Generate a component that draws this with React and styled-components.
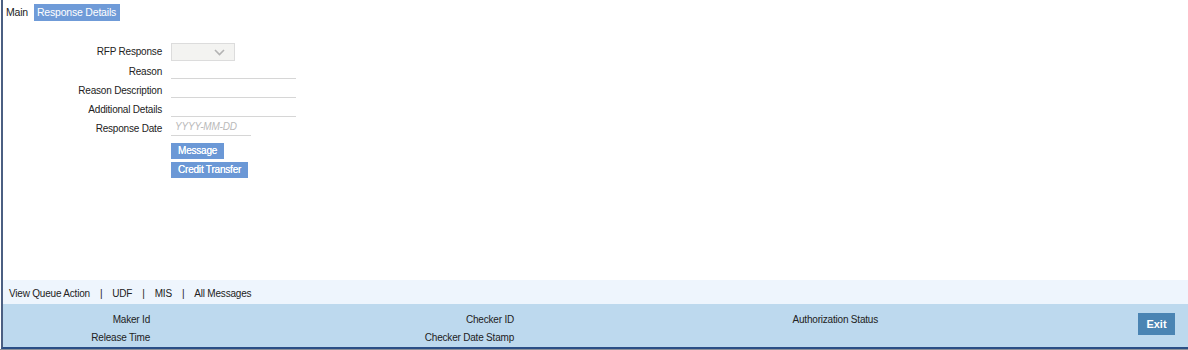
import React from "react";
import styled, { createGlobalStyle } from "styled-components";

const Global = createGlobalStyle`
  html, body { margin: 0; padding: 0; background: #fff; }
  body { font-family: "Liberation Sans", Arial, sans-serif; font-size: 10px; letter-spacing: -0.2px; color: #222; }
  * { box-sizing: border-box; }
`;

const Frame = styled.div`
  width: 1188px;
  height: 350px;
  display: flex;
  flex-direction: column;
  padding-left: 1px;
  border-bottom: 1px solid #8d939b;
`;

const Inner = styled.div`
  flex: 1;
  display: flex;
  flex-direction: column;
  border-left: 2px solid #4b5f82;
  border-bottom: 2px solid #2b4f86;
`;

const Content = styled.div`
  flex: 1;
  display: flex;
  flex-direction: column;
`;

const TabBar = styled.div`
  display: flex;
  padding-top: 4px;
  height: 21px;
`;

const Tab = styled.div`
  height: 17px;
  line-height: 17px;
  padding: 0 4px 0 3px;
  font-size: 10.5px;
  color: ${(p) => (p.$active ? "#fff" : "#222")};
  background: ${(p) => (p.$active ? "#6f9bd8" : "transparent")};
  margin-left: ${(p) => (p.$active ? "2px" : "0")};
`;

const Form = styled.div`
  display: grid;
  grid-template-columns: 159px 1fr;
  column-gap: 9px;
  margin-top: 22px;
`;

const Label = styled.div`
  text-align: right;
  color: #222;
  height: ${(p) => p.$h || 19}px;
  line-height: ${(p) => p.$h || 19}px;
  padding-top: ${(p) => (p.$h ? 0 : 1)}px;
`;

const Field = styled.div`
  height: ${(p) => p.$h || 19}px;
  display: flex;
  align-items: flex-start;
`;

const Select = styled.div`
  width: 64px;
  height: 18px;
  background: #f3f3f1;
  border: 1px solid #dcdcdc;
  display: flex;
  align-items: center;
  justify-content: flex-end;
  padding-right: 9px;
`;

const Input = styled.div`
  width: ${(p) => p.$w}px;
  height: 18px;
  border-bottom: 1px solid #d6d6d6;
  line-height: 18px;
  padding-left: 4px;
  color: #b9b9b9;
  font-style: italic;
`;

const Buttons = styled.div`
  grid-column: 2;
  display: flex;
  flex-direction: column;
  align-items: flex-start;
  gap: 3px;
  margin-top: 6px;
`;

const Btn = styled.div`
  height: 16px;
  line-height: 16px;
  padding: 0 7px;
  background: #6b98d6;
  color: #fff;
  text-shadow: 0 0 0.4px #fff;
`;

const LinkBar = styled.div`
  height: 24px;
  background: #eef5fd;
  display: flex;
  align-items: center;
  padding-left: 6px;
  padding-top: 2px;
  color: #222;
`;

const Sep = styled.span`
  margin: 0 10px;
`;

const Audit = styled.div`
  height: 43px;
  background: #bdd9ee;
  display: flex;
  align-items: flex-start;
`;

const AuditGrid = styled.div`
  flex: 1;
  display: grid;
  grid-template-columns: 147px 216px 148px 216px 148px 1fr;
  grid-auto-rows: 18px;
  padding-top: 7px;
`;

const AuditLabel = styled.div`
  text-align: right;
  line-height: 18px;
  color: #222;
  white-space: nowrap;
  grid-column: ${(p) => p.$col};
  grid-row: ${(p) => p.$row};
`;

const Exit = styled.div`
  margin: 9px 13px 0 0;
  width: 37px;
  height: 22px;
  line-height: 22px;
  text-align: center;
  background: #4a84b3;
  color: #fff;
  font-weight: bold;
  font-size: 11px;
  letter-spacing: 0;
`;

const Chevron = () => (
  <svg width="11" height="7" viewBox="0 0 11 7">
    <polyline points="1,1 5.5,5.5 10,1" fill="none" stroke="#b3b3b3" strokeWidth="1.6" />
  </svg>
);

export default function App() {
  return (
    <>
      <Global />
      <Frame>
        <Inner>
          <Content>
            <TabBar>
              <Tab>Main</Tab>
              <Tab $active>Response Details</Tab>
            </TabBar>
            <Form>
              <Label $h={18}>RFP Response</Label>
              <Field $h={18}>
                <Select>
                  <Chevron />
                </Select>
              </Field>
              <Label>Reason</Label>
              <Field>
                <Input $w={125} />
              </Field>
              <Label>Reason Description</Label>
              <Field>
                <Input $w={125} />
              </Field>
              <Label>Additional Details</Label>
              <Field>
                <Input $w={125} />
              </Field>
              <Label>Response Date</Label>
              <Field>
                <Input $w={80}>YYYY-MM-DD</Input>
              </Field>
              <Buttons>
                <Btn>Message</Btn>
                <Btn>Credit Transfer</Btn>
              </Buttons>
            </Form>
          </Content>
          <LinkBar>
            <span>View Queue Action</span>
            <Sep>|</Sep>
            <span>UDF</span>
            <Sep>|</Sep>
            <span>MIS</span>
            <Sep>|</Sep>
            <span>All Messages</span>
          </LinkBar>
          <Audit>
            <AuditGrid>
              <AuditLabel $col={1} $row={1}>Maker Id</AuditLabel>
              <AuditLabel $col={1} $row={2}>Release Time</AuditLabel>
              <AuditLabel $col={3} $row={1}>Checker ID</AuditLabel>
              <AuditLabel $col={3} $row={2}>Checker Date Stamp</AuditLabel>
              <AuditLabel $col={5} $row={1}>Authorization Status</AuditLabel>
            </AuditGrid>
            <Exit>Exit</Exit>
          </Audit>
        </Inner>
      </Frame>
    </>
  );
}
